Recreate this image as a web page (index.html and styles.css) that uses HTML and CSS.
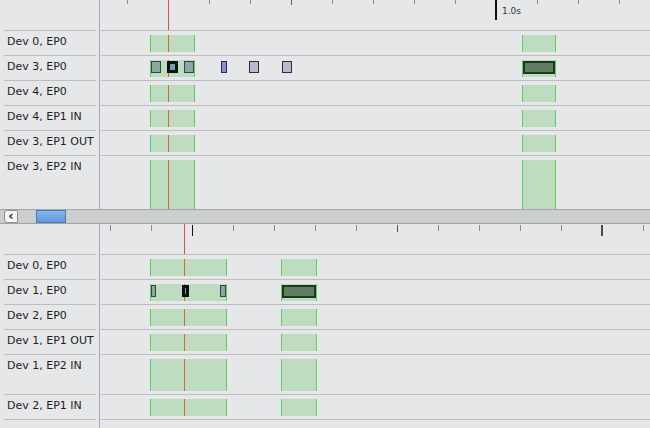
FILE: index.html
```html
<!DOCTYPE html>
<html>
<head>
<meta charset="utf-8">
<link rel="stylesheet" href="styles.css">
</head>
<body>
<div class="app">
  <section class="panel">
    <div class="row ruler">
      <div class="lab blank"></div>
      <div class="trk">
        <i class="tick" style="left:27px"></i>
        <i class="tick" style="left:68px"></i>
        <i class="tick" style="left:109px"></i>
        <i class="tick" style="left:150px"></i>
        <i class="tick mid" style="left:191px"></i>
        <i class="tick" style="left:232px"></i>
        <i class="tick" style="left:273px"></i>
        <i class="tick" style="left:314px"></i>
        <i class="tick" style="left:355px"></i>
        <i class="tick major" style="left:395px"></i>
        <span class="tlabel" style="left:402px">1.0s</span>
        <i class="tick" style="left:437px"></i>
        <i class="tick" style="left:478px"></i>
        <i class="tick" style="left:519px"></i>
        <i class="cursor-r" style="left:68px"></i>
      </div>
    </div>
    <div class="row">
      <div class="lab">Dev 0, EP0</div>
      <div class="trk">
        <div class="act" style="left:50px;width:45px"><i class="cur" style="left:17px"></i></div>
        <div class="act" style="left:422px;width:34px"></div>
      </div>
    </div>
    <div class="row">
      <div class="lab">Dev 3, EP0</div>
      <div class="trk">
        <div class="act" style="left:50px;width:45px"><i class="cur" style="left:17px"></i></div>
        <div class="act" style="left:422px;width:34px"></div>
        <b class="pk teal" style="left:51px;width:10px"></b>
        <b class="pk sel" style="left:67px;width:11px"></b>
        <b class="pk teal" style="left:84px;width:10px"></b>
        <b class="pk blue" style="left:121px;width:6px"></b>
        <b class="pk gray" style="left:149px;width:10px"></b>
        <b class="pk gray" style="left:182px;width:10px"></b>
        <b class="pk big" style="left:423px;width:32px"></b>
      </div>
    </div>
    <div class="row">
      <div class="lab">Dev 4, EP0</div>
      <div class="trk">
        <div class="act" style="left:50px;width:45px"><i class="cur" style="left:17px"></i></div>
        <div class="act" style="left:422px;width:34px"></div>
      </div>
    </div>
    <div class="row">
      <div class="lab">Dev 4, EP1 IN</div>
      <div class="trk">
        <div class="act" style="left:50px;width:45px"><i class="cur" style="left:17px"></i></div>
        <div class="act" style="left:422px;width:34px"></div>
      </div>
    </div>
    <div class="row">
      <div class="lab">Dev 3, EP1 OUT</div>
      <div class="trk">
        <div class="act" style="left:50px;width:45px"><i class="cur" style="left:17px"></i></div>
        <div class="act" style="left:422px;width:34px"></div>
      </div>
    </div>
    <div class="row tall-a">
      <div class="lab">Dev 3, EP2 IN</div>
      <div class="trk">
        <div class="act fill" style="left:50px;width:45px"><i class="cur" style="left:17px"></i></div>
        <div class="act fill" style="left:422px;width:34px"></div>
      </div>
    </div>
  </section>

  <div class="hscroll">
    <div class="sbtn">&#8249;</div>
    <div class="sgap"></div>
    <div class="sthumb"></div>
  </div>

  <section class="panel">
    <div class="row ruler">
      <div class="lab blank"></div>
      <div class="trk">
        <i class="tick b" style="left:10px"></i>
        <i class="tick b" style="left:51px"></i>
        <i class="tick bmark" style="left:92px"></i>
        <i class="tick b" style="left:133px"></i>
        <i class="tick b" style="left:174px"></i>
        <i class="tick b" style="left:215px"></i>
        <i class="tick b" style="left:256px"></i>
        <i class="tick b dark" style="left:297px"></i>
        <i class="tick b" style="left:338px"></i>
        <i class="tick b" style="left:379px"></i>
        <i class="tick b" style="left:420px"></i>
        <i class="tick b" style="left:461px"></i>
        <i class="tick bbig" style="left:501px"></i>
        <i class="tick b" style="left:543px"></i>
        <i class="cursor-r" style="left:84px"></i>
      </div>
    </div>
    <div class="row">
      <div class="lab">Dev 0, EP0</div>
      <div class="trk">
        <div class="act" style="left:50px;width:77px"><i class="cur" style="left:33px"></i></div>
        <div class="act" style="left:181px;width:36px"></div>
      </div>
    </div>
    <div class="row">
      <div class="lab">Dev 1, EP0</div>
      <div class="trk">
        <div class="act" style="left:50px;width:77px"><i class="cur" style="left:33px"></i></div>
        <div class="act" style="left:181px;width:36px"></div>
        <b class="pk teal" style="left:51px;width:5px"></b>
        <b class="pk sel" style="left:82px;width:7px"></b>
        <b class="pk teal" style="left:120px;width:6px"></b>
        <b class="pk big" style="left:182px;width:34px"></b>
      </div>
    </div>
    <div class="row">
      <div class="lab">Dev 2, EP0</div>
      <div class="trk">
        <div class="act" style="left:50px;width:77px"><i class="cur" style="left:33px"></i></div>
        <div class="act" style="left:181px;width:36px"></div>
      </div>
    </div>
    <div class="row">
      <div class="lab">Dev 1, EP1 OUT</div>
      <div class="trk">
        <div class="act" style="left:50px;width:77px"><i class="cur" style="left:33px"></i></div>
        <div class="act" style="left:181px;width:36px"></div>
      </div>
    </div>
    <div class="row tall-b">
      <div class="lab">Dev 1, EP2 IN</div>
      <div class="trk">
        <div class="act" style="left:50px;width:77px"><i class="cur" style="left:33px"></i></div>
        <div class="act" style="left:181px;width:36px"></div>
      </div>
    </div>
    <div class="row">
      <div class="lab">Dev 2, EP1 IN</div>
      <div class="trk">
        <div class="act" style="left:50px;width:77px"><i class="cur" style="left:33px"></i></div>
        <div class="act" style="left:181px;width:36px"></div>
      </div>
    </div>
    <div class="row rest">
      <div class="lab"></div>
      <div class="trk"></div>
    </div>
  </section>
</div>
</body>
</html>
```

FILE: styles.css
```css
html, body {
  margin: 0;
  padding: 0;
}
body {
  width: 650px;
  height: 428px;
  overflow: hidden;
  background: #e6e7e9;
  font-family: "DejaVu Sans", "Liberation Sans", sans-serif;
  color: #1d1d1d;
}
.app {
  display: flex;
  flex-direction: column;
  width: 650px;
  height: 428px;
}
.panel {
  display: flex;
  flex-direction: column;
}
.row {
  display: flex;
  height: 25px;
}
.row.ruler { height: 30px; }
.row.tall-a { height: 54px; }
.row.tall-b { height: 40px; }
.row.rest { height: 9px; }
.lab {
  width: 92px;
  margin: 0 3px 0 4px;
  padding: 4px 0 0 3px;
  border-top: 1px solid #bdbec0;
  font-size: 11px;
  line-height: 13px;
  white-space: nowrap;
  box-sizing: border-box;
}
.lab.blank { border-top: none; }
.trk {
  flex: 1;
  position: relative;
  border-left: 1px solid #a9aaad;
}
.row .trk::before {
  content: "";
  position: absolute;
  left: 1px;
  right: 0;
  top: 0;
  height: 1px;
  background: #bdbec0;
}
.row.ruler .trk::before { display: none; }

.tick {
  position: absolute;
  top: 0;
  width: 1px;
  height: 4px;
  background: #8a8b8d;
}
.tick.mid { height: 5px; background: #5e5f61; }
.tick.major {
  width: 2px;
  height: 20px;
  background: #111;
}
.tick.b { top: 1px; height: 6px; }
.tick.b.dark { background: #555; height: 7px; }
.tick.bmark { top: 1px; height: 11px; background: #111; }
.tick.bbig { top: 1px; height: 11px; width: 2px; background: #4a4a4c; }
.tlabel {
  position: absolute;
  top: 6px;
  font-size: 9px;
  line-height: 11px;
  color: #333;
}
.cursor-r {
  position: absolute;
  top: 0;
  bottom: 0;
  width: 1px;
  background: #f04a48;
}

.act {
  position: absolute;
  top: 5px;
  height: 17px;
  box-sizing: border-box;
  background: #bedcbf;
  border-left: 1px solid #5fce60;
  border-right: 1px solid #5fce60;
}
.tall-a .act.fill { top: 5px; height: auto; bottom: 0; }
.tall-b .act { height: auto; bottom: 3px; }
.cur {
  position: absolute;
  top: 0;
  bottom: 0;
  width: 1px;
  background: #e2603e;
}

.pk {
  position: absolute;
  top: 6px;
  height: 12px;
  box-sizing: border-box;
  border: 1px solid #2f3f38;
}
.pk.teal { background: #89a7a5; border-color: #34463f; }
.pk.sel { background: #7a98b8; border: 3px solid #06140a; }
.pk.blue { background: #8a8ae2; border-color: #2a2a48; }
.pk.gray { background: #b9b9cb; border-color: #2e2e36; }
.pk.big { background: #5f7f60; border: 2px solid #1c381e; height: 13px; }

.hscroll {
  display: flex;
  align-items: center;
  height: 15px;
  box-sizing: border-box;
  background: #cdcecf;
  border-top: 1px solid #a3a4a6;
  border-bottom: 1px solid #a3a4a6;
  padding-left: 4px;
}
.sbtn {
  width: 14px;
  height: 13px;
  box-sizing: border-box;
  background: #f7f7f7;
  border: 1px solid #8d8e90;
  border-radius: 3px 0 0 3px;
  font-size: 13px;
  line-height: 10px;
  text-align: center;
  font-weight: bold;
  color: #222;
}
.sgap { width: 18px; }
.sthumb {
  width: 30px;
  height: 13px;
  box-sizing: border-box;
  background: linear-gradient(#84b4ec, #6299da);
  border: 1px solid #4d7cb4;
}
```
